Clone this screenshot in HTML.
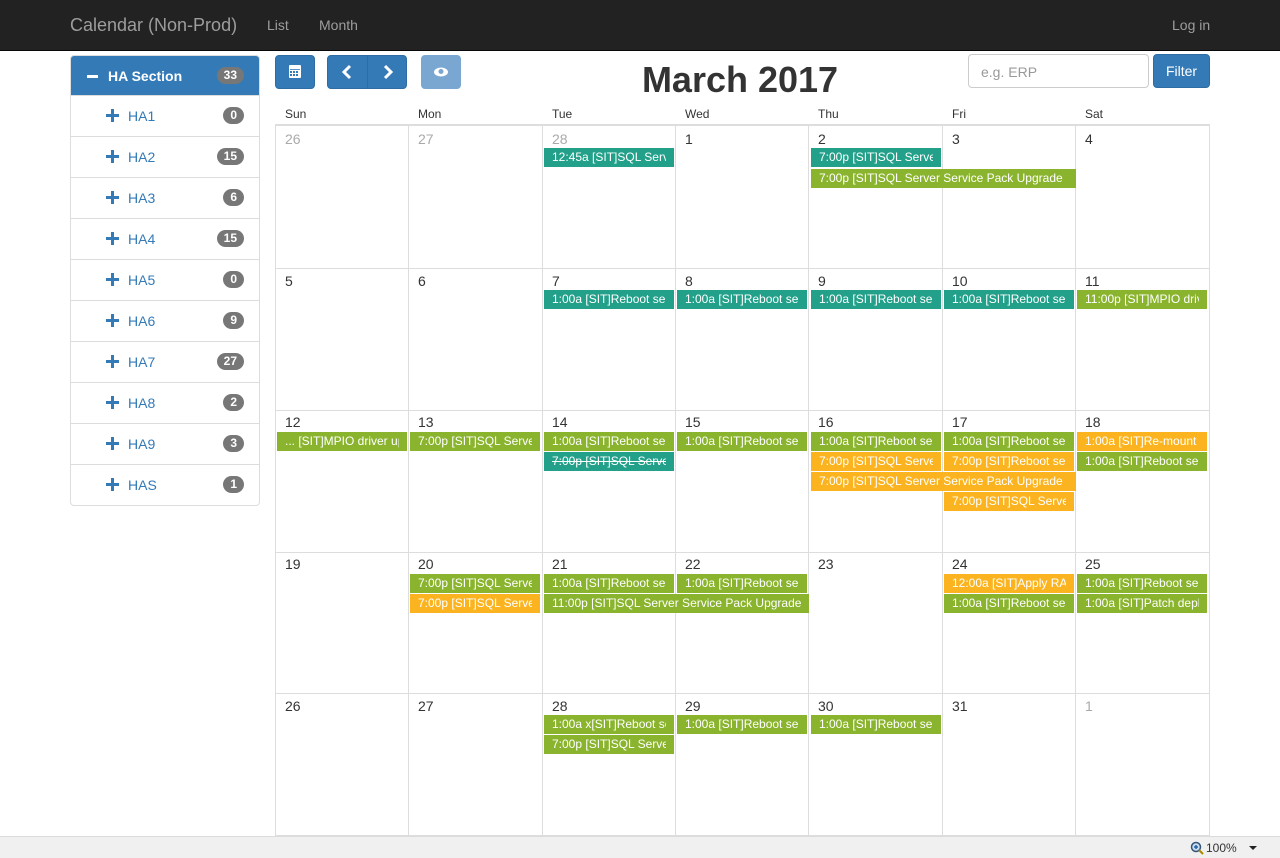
<!DOCTYPE html>
<html><head><meta charset="utf-8"><style>
*{box-sizing:border-box;margin:0;padding:0}
body{width:1280px;height:858px;overflow:hidden;background:#fff;font-family:"Liberation Sans",Arial,sans-serif;position:relative;color:#333}
.nav{position:absolute;left:0;top:0;width:1280px;height:51px;background:#222;border-bottom:1px solid #080808}
.nav span{position:absolute;color:#9d9d9d;top:17px;font-size:14px}
.side{position:absolute;left:70px;top:55px;width:190px;border:1px solid #ddd;border-radius:4px;overflow:hidden}
.it{height:41px;border-top:1px solid #ddd;position:relative;color:#337ab7;font-size:14px}
.it:first-child{border-top:none;background:#337ab7;color:#fff;font-weight:bold;height:39px}
.it .pl{position:absolute;left:35px;top:13px}
.it .t{position:absolute;left:57px;top:12px}
.it .b{position:absolute;right:15px;top:11px;background:#777;color:#fff;font-size:12px;font-weight:bold;border-radius:10px;padding:1px 7px;line-height:15px}
.btn{position:absolute;top:55px;height:34px;background:#337ab7;border:1px solid #2e6da4;border-radius:4px;color:#fff}
h2{position:absolute;left:600px;width:280px;text-align:center;top:59px;font-size:36px;font-weight:bold;color:#333}
.inp{position:absolute;left:968px;top:54px;width:181px;height:34px;border:1px solid #ccc;border-radius:4px;color:#999;font-size:14px;padding:9px 12px}
.flt{position:absolute;left:1153px;top:54px;width:57px;height:34px;background:#337ab7;border:1px solid #2e6da4;border-radius:4px;color:#fff;font-size:14px;text-align:center;line-height:32px}
.dh{position:absolute;top:107px;font-size:12px;color:#333}
.grid{position:absolute;left:275px;top:124px;width:935px;height:712px;border:1px solid #ddd;border-top:2px solid #ddd}
.vl{position:absolute;top:126px;width:1px;height:710px;background:#ddd}
.hl{position:absolute;left:275px;width:935px;height:1px;background:#ddd}
.dn{position:absolute;font-size:14px;color:#333}
.dn.o{color:#aaa}
.e{position:absolute;height:19px;width:130px;color:#fff;font-size:12px;line-height:19px;padding-left:8px;white-space:nowrap;overflow:hidden}
.e i{font-style:normal;display:block;overflow:hidden;width:114px}
.e.w2 i{width:250px}
.g{background:#8ab42e}.tl{background:#22a089}.or{background:#fbb41f}
.w2{width:265px}
.status{position:absolute;left:0;top:836px;width:1280px;height:22px;background:#f0f0f0;border-top:1px solid #dcdcdc;font-size:12px}
</style></head><body>
<div class="nav"><span style="left:70px;top:15px;font-size:18px">Calendar (Non-Prod)</span><span style="left:267px">List</span><span style="left:319px">Month</span><span style="left:1172px">Log in</span></div>

<div class="side">
<div class="it"><svg class="pl" style="left:16px;top:14px" width="12" height="12"><rect x="0" y="5" width="11" height="3" fill="#fff"/></svg><span class="t" style="left:37px;top:12px">HA Section</span><span class="b" style="top:11px">33</span></div>
<div class="it"><svg class="pl" width="13" height="13"><path d="M0 5h13v3H0zM5 0h3v13H5z" fill="#337ab7"/></svg><span class="t">HA1</span><span class="b">0</span></div>
<div class="it"><svg class="pl" width="13" height="13"><path d="M0 5h13v3H0zM5 0h3v13H5z" fill="#337ab7"/></svg><span class="t">HA2</span><span class="b">15</span></div>
<div class="it"><svg class="pl" width="13" height="13"><path d="M0 5h13v3H0zM5 0h3v13H5z" fill="#337ab7"/></svg><span class="t">HA3</span><span class="b">6</span></div>
<div class="it"><svg class="pl" width="13" height="13"><path d="M0 5h13v3H0zM5 0h3v13H5z" fill="#337ab7"/></svg><span class="t">HA4</span><span class="b">15</span></div>
<div class="it"><svg class="pl" width="13" height="13"><path d="M0 5h13v3H0zM5 0h3v13H5z" fill="#337ab7"/></svg><span class="t">HA5</span><span class="b">0</span></div>
<div class="it"><svg class="pl" width="13" height="13"><path d="M0 5h13v3H0zM5 0h3v13H5z" fill="#337ab7"/></svg><span class="t">HA6</span><span class="b">9</span></div>
<div class="it"><svg class="pl" width="13" height="13"><path d="M0 5h13v3H0zM5 0h3v13H5z" fill="#337ab7"/></svg><span class="t">HA7</span><span class="b">27</span></div>
<div class="it"><svg class="pl" width="13" height="13"><path d="M0 5h13v3H0zM5 0h3v13H5z" fill="#337ab7"/></svg><span class="t">HA8</span><span class="b">2</span></div>
<div class="it"><svg class="pl" width="13" height="13"><path d="M0 5h13v3H0zM5 0h3v13H5z" fill="#337ab7"/></svg><span class="t">HA9</span><span class="b">3</span></div>
<div class="it"><svg class="pl" width="13" height="13"><path d="M0 5h13v3H0zM5 0h3v13H5z" fill="#337ab7"/></svg><span class="t">HAS</span><span class="b">1</span></div>
</div>

<div class="btn" style="left:275px;width:40px"><svg width="38" height="32" viewBox="0 0 38 32"><rect x="13" y="9" width="12" height="13" rx="1" fill="#fff"/><g fill="#337ab7"><rect x="14" y="13" width="10" height="0.8"/><rect x="14" y="15" width="2" height="2"/><rect x="17" y="15" width="2" height="2"/><rect x="20" y="15" width="2" height="2"/><rect x="14" y="18" width="2" height="2"/><rect x="17" y="18" width="2" height="2"/><rect x="20" y="18" width="2" height="2"/></g></svg></div>
<div class="btn" style="left:327px;width:41px;border-radius:4px 0 0 4px"><svg width="40" height="32"><path d="M22 10 L16 16 L22 22" stroke="#fff" stroke-width="3" fill="none"/></svg></div>
<div class="btn" style="left:367px;width:40px;border-radius:0 4px 4px 0"><svg width="40" height="32"><path d="M17 10 L23 16 L17 22" stroke="#fff" stroke-width="3" fill="none"/></svg></div>
<div class="btn" style="left:421px;width:40px;background:#7aa7d2;border-color:#7aa7d2"><svg width="38" height="32"><ellipse cx="19" cy="16" rx="7" ry="4.5" fill="#fff"/><circle cx="19" cy="15.5" r="2.5" fill="#7aa7d2"/></svg></div>
<h2>March 2017</h2>
<div class="inp">e.g. ERP</div>
<div class="flt">Filter</div>

<span class="dh" style="left:285px">Sun</span><span class="dh" style="left:418px">Mon</span><span class="dh" style="left:552px">Tue</span><span class="dh" style="left:685px">Wed</span><span class="dh" style="left:818px">Thu</span><span class="dh" style="left:952px">Fri</span><span class="dh" style="left:1085px">Sat</span>
<div class="grid"></div>
<div class="vl" style="left:408px"></div><div class="vl" style="left:542px"></div><div class="vl" style="left:675px"></div><div class="vl" style="left:808px"></div><div class="vl" style="left:942px"></div><div class="vl" style="left:1075px"></div>
<div class="hl" style="top:268px"></div><div class="hl" style="top:410px"></div><div class="hl" style="top:552px"></div><div class="hl" style="top:693px"></div>

<span class="dn o" style="left:285px;top:131px">26</span><span class="dn o" style="left:418px;top:131px">27</span><span class="dn o" style="left:552px;top:131px">28</span><span class="dn" style="left:685px;top:131px">1</span><span class="dn" style="left:818px;top:131px">2</span><span class="dn" style="left:952px;top:131px">3</span><span class="dn" style="left:1085px;top:131px">4</span>
<span class="dn" style="left:285px;top:273px">5</span><span class="dn" style="left:418px;top:273px">6</span><span class="dn" style="left:552px;top:273px">7</span><span class="dn" style="left:685px;top:273px">8</span><span class="dn" style="left:818px;top:273px">9</span><span class="dn" style="left:952px;top:273px">10</span><span class="dn" style="left:1085px;top:273px">11</span>
<span class="dn" style="left:285px;top:414px">12</span><span class="dn" style="left:418px;top:414px">13</span><span class="dn" style="left:552px;top:414px">14</span><span class="dn" style="left:685px;top:414px">15</span><span class="dn" style="left:818px;top:414px">16</span><span class="dn" style="left:952px;top:414px">17</span><span class="dn" style="left:1085px;top:414px">18</span>
<span class="dn" style="left:285px;top:556px">19</span><span class="dn" style="left:418px;top:556px">20</span><span class="dn" style="left:552px;top:556px">21</span><span class="dn" style="left:685px;top:556px">22</span><span class="dn" style="left:818px;top:556px">23</span><span class="dn" style="left:952px;top:556px">24</span><span class="dn" style="left:1085px;top:556px">25</span>
<span class="dn" style="left:285px;top:698px">26</span><span class="dn" style="left:418px;top:698px">27</span><span class="dn" style="left:552px;top:698px">28</span><span class="dn" style="left:685px;top:698px">29</span><span class="dn" style="left:818px;top:698px">30</span><span class="dn" style="left:952px;top:698px">31</span><span class="dn o" style="left:1085px;top:698px">1</span>

<div class="e tl" style="left:544px;top:148px"><i>12:45a [SIT]SQL Server</i></div>
<div class="e tl" style="left:811px;top:148px"><i>7:00p [SIT]SQL Server</i></div>
<div class="e g w2" style="left:811px;top:169px"><i>7:00p [SIT]SQL Server Service Pack Upgrade</i></div>
<div class="e tl" style="left:544px;top:290px"><i>1:00a [SIT]Reboot server</i></div>
<div class="e tl" style="left:677px;top:290px"><i>1:00a [SIT]Reboot server</i></div>
<div class="e tl" style="left:811px;top:290px"><i>1:00a [SIT]Reboot server</i></div>
<div class="e tl" style="left:944px;top:290px"><i>1:00a [SIT]Reboot server</i></div>
<div class="e g" style="left:1077px;top:290px"><i>11:00p [SIT]MPIO driver</i></div>
<div class="e g" style="left:277px;top:432px"><i>... [SIT]MPIO driver update</i></div>
<div class="e g" style="left:410px;top:432px"><i>7:00p [SIT]SQL Server</i></div>
<div class="e g" style="left:544px;top:432px"><i>1:00a [SIT]Reboot server</i></div>
<div class="e tl" style="left:544px;top:452px;text-decoration:line-through"><i>7:00p [SIT]SQL Server</i></div>
<div class="e g" style="left:677px;top:432px"><i>1:00a [SIT]Reboot server</i></div>
<div class="e g" style="left:811px;top:432px"><i>1:00a [SIT]Reboot server</i></div>
<div class="e or" style="left:811px;top:452px"><i>7:00p [SIT]SQL Server</i></div>
<div class="e or w2" style="left:811px;top:472px"><i>7:00p [SIT]SQL Server Service Pack Upgrade</i></div>
<div class="e g" style="left:944px;top:432px"><i>1:00a [SIT]Reboot server</i></div>
<div class="e or" style="left:944px;top:452px"><i>7:00p [SIT]Reboot server</i></div>
<div class="e or" style="left:944px;top:492px"><i>7:00p [SIT]SQL Server</i></div>
<div class="e or" style="left:1077px;top:432px"><i>1:00a [SIT]Re-mount</i></div>
<div class="e g" style="left:1077px;top:452px"><i>1:00a [SIT]Reboot server</i></div>
<div class="e g" style="left:410px;top:574px"><i>7:00p [SIT]SQL Server</i></div>
<div class="e or" style="left:410px;top:594px"><i>7:00p [SIT]SQL Server</i></div>
<div class="e g" style="left:544px;top:574px"><i>1:00a [SIT]Reboot server</i></div>
<div class="e g w2" style="left:544px;top:594px"><i>11:00p [SIT]SQL Server Service Pack Upgrade</i></div>
<div class="e g" style="left:677px;top:574px"><i>1:00a [SIT]Reboot server</i></div>
<div class="e or" style="left:944px;top:574px"><i>12:00a [SIT]Apply RA</i></div>
<div class="e g" style="left:944px;top:594px"><i>1:00a [SIT]Reboot server</i></div>
<div class="e g" style="left:1077px;top:574px"><i>1:00a [SIT]Reboot server</i></div>
<div class="e g" style="left:1077px;top:594px"><i>1:00a [SIT]Patch deploy</i></div>
<div class="e g" style="left:544px;top:715px"><i>1:00a x[SIT]Reboot server</i></div>
<div class="e g" style="left:544px;top:735px"><i>7:00p [SIT]SQL Server</i></div>
<div class="e g" style="left:677px;top:715px"><i>1:00a [SIT]Reboot server</i></div>
<div class="e g" style="left:811px;top:715px"><i>1:00a [SIT]Reboot server</i></div>

<div class="status"><svg style="position:absolute;left:1190px;top:4px" width="14" height="14"><circle cx="6" cy="6" r="4.5" fill="#cde" stroke="#357" stroke-width="1.5"/><path d="M4 6h4M6 4v4" stroke="#26a" stroke-width="1.5"/><path d="M9 9l4 4" stroke="#a80" stroke-width="2"/></svg><span style="position:absolute;left:1206px;top:4px">100%</span><svg style="position:absolute;left:1249px;top:9px" width="9" height="5"><path d="M0 0h8L4 4z" fill="#222"/></svg></div>
</body></html>
